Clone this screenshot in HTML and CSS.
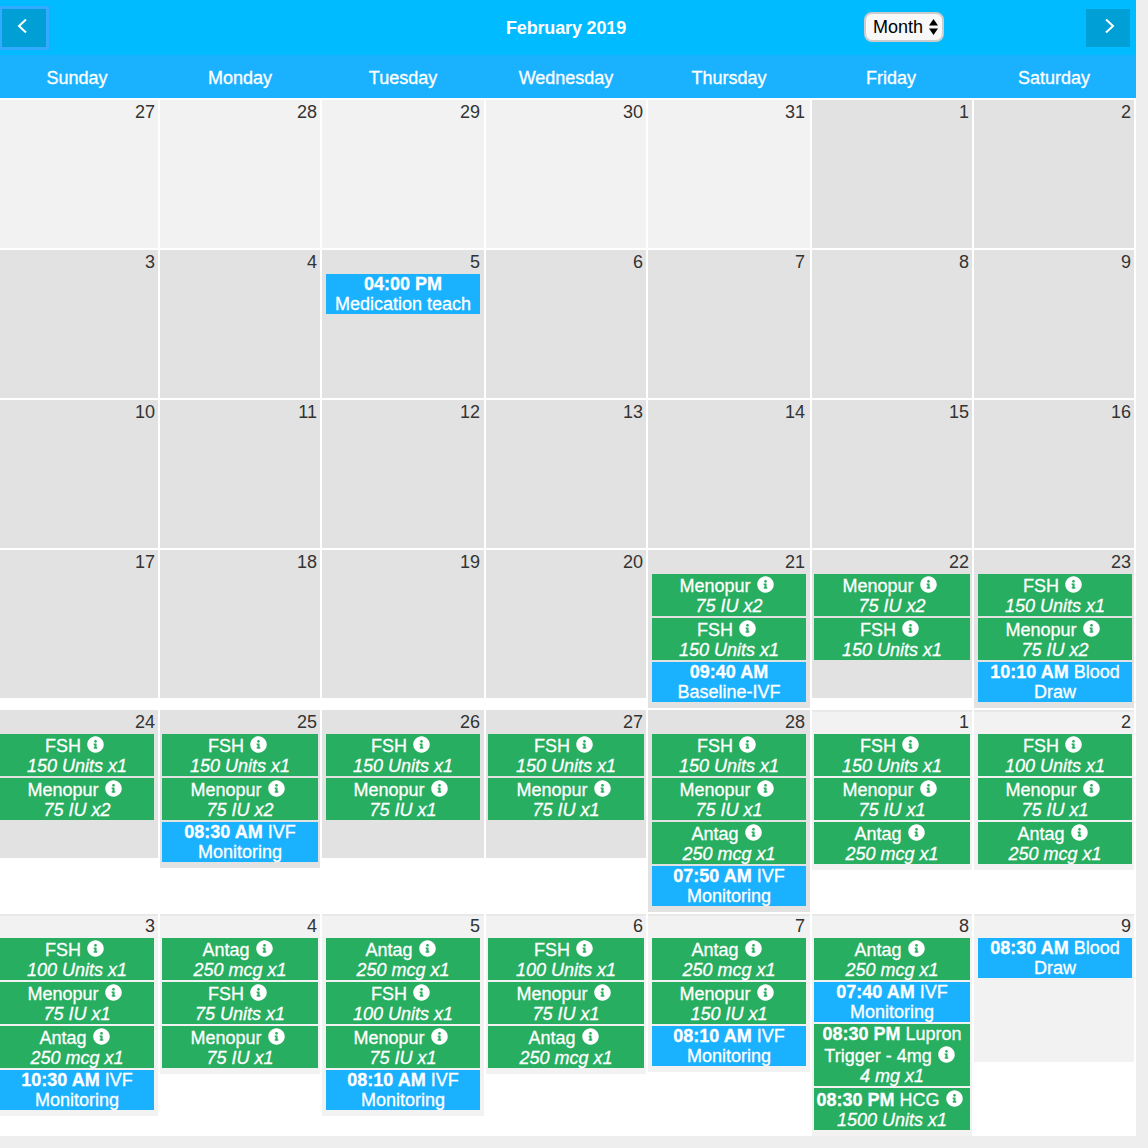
FILE: index.html
```html
<!DOCTYPE html>
<html lang="en">
<head>
<meta charset="utf-8">
<title>February 2019</title>
<link rel="stylesheet" href="styles.css">
</head>
<body>
<svg class="defs" width="0" height="0" aria-hidden="true">
  <symbol id="info" viewBox="0 0 512 512">
    <path fill="currentColor" fill-rule="evenodd" d="M256 8C119 8 8 119 8 256s111 248 248 248 248-111 248-248S393 8 256 8zm0 110c23 0 42 19 42 42s-19 42-42 42-42-19-42-42 19-42 42-42zm56 254c0 7-5 12-12 12h-88c-7 0-12-5-12-12v-24c0-7 5-12 12-12h12v-64h-12c-7 0-12-5-12-12v-24c0-7 5-12 12-12h64c7 0 12 5 12 12v100h12c7 0 12 5 12 12z"/>
  </symbol>
</svg>
<main class="calendar">
  <header class="topbar">
    <div class="top-left">
      <button class="nav nav-prev" type="button" aria-label="Previous"><svg width="10" height="16" viewBox="0 0 10 16"><polyline points="9,1.500 2,8 9,14.500"/></svg></button>
    </div>
    <h1 class="title">February 2019</h1>
    <div class="top-right">
      <div class="select">Month<svg width="9" height="16" viewBox="0 0 9 16"><path d="M4.500 0 9 6.500H0zM4.500 16 0 9.500h9z"/></svg></div>
      <button class="nav nav-next" type="button" aria-label="Next"><svg width="10" height="16" viewBox="0 0 10 16"><polyline points="1,1.500 8,8 1,14.500"/></svg></button>
    </div>
  </header>
  <div class="week weekdays">
    <div class="wd">Sunday</div><div class="wd">Monday</div><div class="wd">Tuesday</div><div class="wd">Wednesday</div><div class="wd">Thursday</div><div class="wd">Friday</div><div class="wd">Saturday</div>
  </div>

  <section class="week">
    <div class="day other"><div class="num">27</div></div>
    <div class="day other"><div class="num">28</div></div>
    <div class="day other"><div class="num">29</div></div>
    <div class="day other"><div class="num">30</div></div>
    <div class="day other"><div class="num">31</div></div>
    <div class="day"><div class="num">1</div></div>
    <div class="day"><div class="num">2</div></div>
  </section>

  <section class="week">
    <div class="day"><div class="num">3</div></div>
    <div class="day"><div class="num">4</div></div>
    <div class="day"><div class="num">5</div>
      <div class="ev appt"><b>04:00 PM</b><br>Medication teach</div>
    </div>
    <div class="day"><div class="num">6</div></div>
    <div class="day"><div class="num">7</div></div>
    <div class="day"><div class="num">8</div></div>
    <div class="day"><div class="num">9</div></div>
  </section>

  <section class="week">
    <div class="day"><div class="num">10</div></div>
    <div class="day"><div class="num">11</div></div>
    <div class="day"><div class="num">12</div></div>
    <div class="day"><div class="num">13</div></div>
    <div class="day"><div class="num">14</div></div>
    <div class="day"><div class="num">15</div></div>
    <div class="day"><div class="num">16</div></div>
  </section>

  <section class="week">
    <div class="day"><div class="num">17</div></div>
    <div class="day"><div class="num">18</div></div>
    <div class="day"><div class="num">19</div></div>
    <div class="day"><div class="num">20</div></div>
    <div class="day"><div class="num">21</div>
      <div class="ev med">Menopur <svg class="i"><use href="#info"/></svg><br><i>75 IU x2</i></div>
      <div class="ev med">FSH <svg class="i"><use href="#info"/></svg><br><i>150 Units x1</i></div>
      <div class="ev appt"><b>09:40 AM</b><br>Baseline-IVF</div>
    </div>
    <div class="day"><div class="num">22</div>
      <div class="ev med">Menopur <svg class="i"><use href="#info"/></svg><br><i>75 IU x2</i></div>
      <div class="ev med">FSH <svg class="i"><use href="#info"/></svg><br><i>150 Units x1</i></div>
    </div>
    <div class="day"><div class="num">23</div>
      <div class="ev med">FSH <svg class="i"><use href="#info"/></svg><br><i>150 Units x1</i></div>
      <div class="ev med">Menopur <svg class="i"><use href="#info"/></svg><br><i>75 IU x2</i></div>
      <div class="ev appt"><b>10:10 AM</b> Blood Draw</div>
    </div>
  </section>

  <section class="week week-lined">
    <div class="day"><div class="num">24</div>
      <div class="ev med">FSH <svg class="i"><use href="#info"/></svg><br><i>150 Units x1</i></div>
      <div class="ev med">Menopur <svg class="i"><use href="#info"/></svg><br><i>75 IU x2</i></div>
    </div>
    <div class="day"><div class="num">25</div>
      <div class="ev med">FSH <svg class="i"><use href="#info"/></svg><br><i>150 Units x1</i></div>
      <div class="ev med">Menopur <svg class="i"><use href="#info"/></svg><br><i>75 IU x2</i></div>
      <div class="ev appt"><b>08:30 AM</b> IVF Monitoring</div>
    </div>
    <div class="day"><div class="num">26</div>
      <div class="ev med">FSH <svg class="i"><use href="#info"/></svg><br><i>150 Units x1</i></div>
      <div class="ev med">Menopur <svg class="i"><use href="#info"/></svg><br><i>75 IU x1</i></div>
    </div>
    <div class="day"><div class="num">27</div>
      <div class="ev med">FSH <svg class="i"><use href="#info"/></svg><br><i>150 Units x1</i></div>
      <div class="ev med">Menopur <svg class="i"><use href="#info"/></svg><br><i>75 IU x1</i></div>
    </div>
    <div class="day"><div class="num">28</div>
      <div class="ev med">FSH <svg class="i"><use href="#info"/></svg><br><i>150 Units x1</i></div>
      <div class="ev med">Menopur <svg class="i"><use href="#info"/></svg><br><i>75 IU x1</i></div>
      <div class="ev med">Antag <svg class="i"><use href="#info"/></svg><br><i>250 mcg x1</i></div>
      <div class="ev appt"><b>07:50 AM</b> IVF Monitoring</div>
    </div>
    <div class="day other"><div class="num">1</div>
      <div class="ev med">FSH <svg class="i"><use href="#info"/></svg><br><i>150 Units x1</i></div>
      <div class="ev med">Menopur <svg class="i"><use href="#info"/></svg><br><i>75 IU x1</i></div>
      <div class="ev med">Antag <svg class="i"><use href="#info"/></svg><br><i>250 mcg x1</i></div>
    </div>
    <div class="day other"><div class="num">2</div>
      <div class="ev med">FSH <svg class="i"><use href="#info"/></svg><br><i>100 Units x1</i></div>
      <div class="ev med">Menopur <svg class="i"><use href="#info"/></svg><br><i>75 IU x1</i></div>
      <div class="ev med">Antag <svg class="i"><use href="#info"/></svg><br><i>250 mcg x1</i></div>
    </div>
  </section>

  <section class="week week-lined">
    <div class="day other"><div class="num">3</div>
      <div class="ev med">FSH <svg class="i"><use href="#info"/></svg><br><i>100 Units x1</i></div>
      <div class="ev med">Menopur <svg class="i"><use href="#info"/></svg><br><i>75 IU x1</i></div>
      <div class="ev med">Antag <svg class="i"><use href="#info"/></svg><br><i>250 mcg x1</i></div>
      <div class="ev appt"><b>10:30 AM</b> IVF Monitoring</div>
    </div>
    <div class="day other"><div class="num">4</div>
      <div class="ev med">Antag <svg class="i"><use href="#info"/></svg><br><i>250 mcg x1</i></div>
      <div class="ev med">FSH <svg class="i"><use href="#info"/></svg><br><i>75 Units x1</i></div>
      <div class="ev med">Menopur <svg class="i"><use href="#info"/></svg><br><i>75 IU x1</i></div>
    </div>
    <div class="day other"><div class="num">5</div>
      <div class="ev med">Antag <svg class="i"><use href="#info"/></svg><br><i>250 mcg x1</i></div>
      <div class="ev med">FSH <svg class="i"><use href="#info"/></svg><br><i>100 Units x1</i></div>
      <div class="ev med">Menopur <svg class="i"><use href="#info"/></svg><br><i>75 IU x1</i></div>
      <div class="ev appt"><b>08:10 AM</b> IVF Monitoring</div>
    </div>
    <div class="day other"><div class="num">6</div>
      <div class="ev med">FSH <svg class="i"><use href="#info"/></svg><br><i>100 Units x1</i></div>
      <div class="ev med">Menopur <svg class="i"><use href="#info"/></svg><br><i>75 IU x1</i></div>
      <div class="ev med">Antag <svg class="i"><use href="#info"/></svg><br><i>250 mcg x1</i></div>
    </div>
    <div class="day other"><div class="num">7</div>
      <div class="ev med">Antag <svg class="i"><use href="#info"/></svg><br><i>250 mcg x1</i></div>
      <div class="ev med">Menopur <svg class="i"><use href="#info"/></svg><br><i>150 IU x1</i></div>
      <div class="ev appt"><b>08:10 AM</b> IVF Monitoring</div>
    </div>
    <div class="day other"><div class="num">8</div>
      <div class="ev med">Antag <svg class="i"><use href="#info"/></svg><br><i>250 mcg x1</i></div>
      <div class="ev appt"><b>07:40 AM</b> IVF Monitoring</div>
      <div class="ev med"><b>08:30 PM</b> Lupron Trigger - 4mg <svg class="i"><use href="#info"/></svg><br><i>4 mg x1</i></div>
      <div class="ev med"><b>08:30 PM</b> HCG <svg class="i"><use href="#info"/></svg><br><i>1500 Units x1</i></div>
    </div>
    <div class="day other"><div class="num">9</div>
      <div class="ev appt"><b>08:30 AM</b> Blood Draw</div>
    </div>
  </section>
</main>
</body>
</html>
```
FILE: styles.css
```css
* { box-sizing: border-box; }
html, body { margin: 0; }
body {
  background: #eeeeee;
  font-family: "Liberation Sans", Arial, sans-serif;
  font-size: 18px;
  line-height: 20px;
  color: #333333;
}
.defs { position: absolute; }
.calendar { width: 1136px; background: #ffffff; }

.topbar {
  display: grid;
  grid-template-columns: 1fr auto 1fr;
  align-items: center;
  height: 55px;
  padding-right: 4px;
  background: #00bbff;
}
.top-left { display: flex; padding-left: 2px; }
.top-right { display: flex; align-items: center; justify-content: flex-end; gap: 142px; padding-right: 2px; }
.title {
  margin: 0;
  font-size: 18px;
  line-height: 20px;
  font-weight: 700;
  letter-spacing: -0.15px;
  color: #ffffff;
}
.nav {
  display: flex;
  align-items: center;
  justify-content: center;
  width: 44px;
  height: 38px;
  padding: 0 0 3px;
  border: 0;
  background: #009fd6;
}
.nav svg { fill: none; stroke: #ffffff; stroke-width: 2; }
.nav-prev { padding-right: 4px; outline: 3px solid #33aaff; outline-offset: 0; }
.nav-next { padding-left: 4px; }
.select {
  display: flex;
  align-items: center;
  gap: 6px;
  width: 80px;
  height: 30px;
  margin-top: -1px;
  padding-left: 7px;
  border: 2px solid #cccccc;
  border-radius: 8px;
  background: #f8f8f8;
  color: #000000;
}
.select svg { fill: #000000; }

.week {
  display: grid;
  grid-template-columns: 158px 160px 162px 160px 162px 160px 160px;
  column-gap: 2px;
  align-items: start;
  width: 1134px;
  padding-top: 2px;
}
.weekdays {
  width: 1136px;
  height: 43px;
  padding: 2px 0 0;
  background: #1ab2ff;
  align-items: center;
  color: #ffffff;
  -webkit-text-stroke: 0.3px #ffffff;
}
.wd { text-align: center; padding: 0 4px 0 0; }
.wd:nth-child(n+2) { padding: 0 2px; }
.wd:nth-child(3), .wd:nth-child(5) { padding: 0 4px; }
.wd:nth-child(6) { padding: 0 3px 0 1px; }
.wd:nth-child(7) { padding: 0 4px; }

.day {
  min-height: 148px;
  padding: 0 2px 4px;
  background: #e2e2e2;
}
.day.other { background: #f2f2f2; }
.week-lined .day.other { box-shadow: inset 0 2px 0 #e8e8e8; }
.day:nth-child(1) { padding-left: 0; padding-right: 4px; }
.day:nth-child(3), .day:nth-child(5) { padding-left: 4px; padding-right: 4px; }
.day:nth-child(7) { padding-left: 4px; }
.num {
  height: 24px;
  padding: 2px 1px 0 0;
  text-align: right;
}
.day:nth-child(1) .num { margin-right: -2px; }
.day:nth-child(3) .num { margin-right: -1px; }
.ev {
  margin-bottom: 2px;
  text-align: center;
  color: #ffffff;
  -webkit-text-stroke: 0.3px #ffffff;
}
.med { background: #27ae60; }
.appt { background: #1ab2ff; }
.i {
  display: inline-block;
  width: 17px;
  height: 17px;
  margin: 2px 5px 0 1px;
  vertical-align: -1px;
  color: #ffffff;
}
```
